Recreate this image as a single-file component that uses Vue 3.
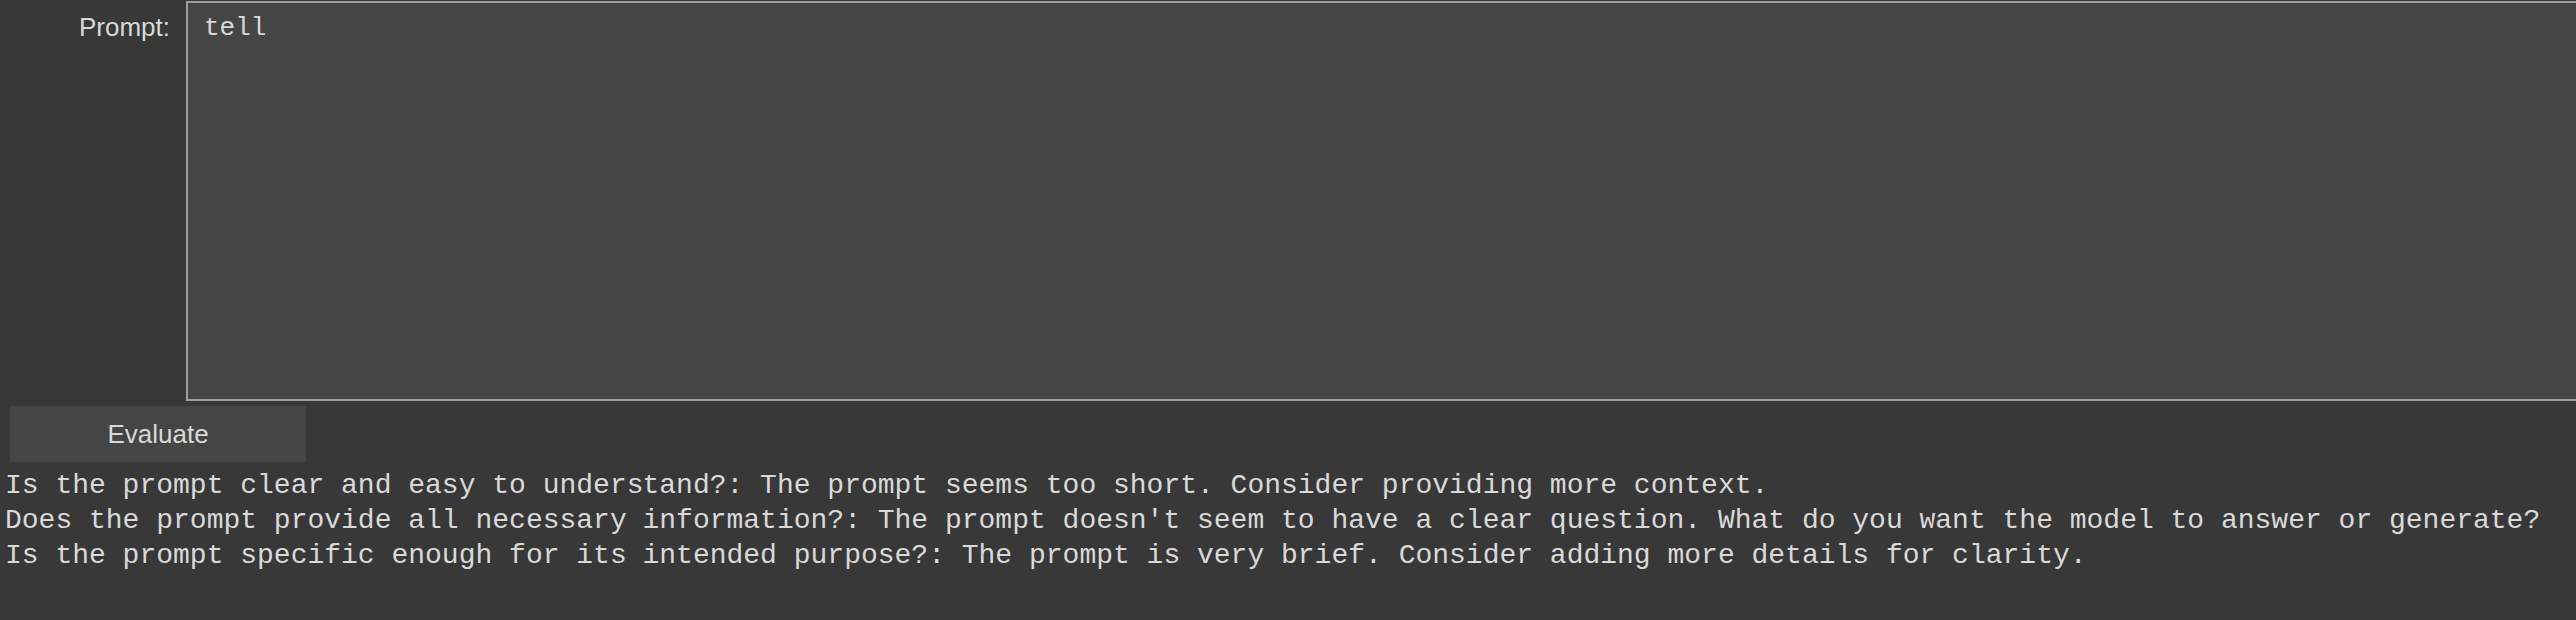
<script setup>
import { ref } from 'vue'

const prompt = ref('tell')
const results = ref([
  'Is the prompt clear and easy to understand?: The prompt seems too short. Consider providing more context.',
  "Does the prompt provide all necessary information?: The prompt doesn't seem to have a clear question. What do you want the model to answer or generate?",
  'Is the prompt specific enough for its intended purpose?: The prompt is very brief. Consider adding more details for clarity.',
])
</script>

<template>
  <main class="panel">
    <div class="field">
      <label class="label" for="prompt">Prompt:</label>
      <textarea id="prompt" v-model="prompt" class="input" spellcheck="false"></textarea>
    </div>
    <button class="evaluate" type="button">Evaluate</button>
    <div class="output">
      <p v-for="line in results" :key="line" class="line">{{ line }}</p>
    </div>
  </main>
</template>

<style>
body {
  background: #383838;
}
</style>

<style scoped>
.panel {
  box-sizing: border-box;
  min-height: 100vh;
  padding-top: 1px;
  background: #383838;
  color: #d9d9d9;
  font-family: "Liberation Sans", Arial, sans-serif;
  font-size: 26px;
}

.field {
  display: flex;
  gap: 16px;
}

.label {
  width: 170px;
  padding-top: 8px;
  line-height: 36px;
  text-align: right;
}

.input {
  box-sizing: border-box;
  flex: 1;
  min-width: 0;
  height: 400px;
  margin: 0;
  padding: 7px 16px;
  border: 2px solid #9e9e9e;
  border-right: 0;
  border-radius: 0;
  outline: 0;
  resize: none;
  background: #454545;
  color: inherit;
  font-family: "Liberation Mono", "Courier New", monospace;
  font-size: 26px;
  line-height: 36px;
}

.evaluate {
  display: block;
  width: 296px;
  height: 56px;
  margin: 5px 10px 6px;
  padding: 0;
  border: 0;
  background: #454545;
  color: inherit;
  font: inherit;
}

.output {
  padding: 0 5px;
  font-family: "Liberation Mono", "Courier New", monospace;
  font-size: 28px;
  line-height: 35px;
}

.line {
  margin: 0;
  white-space: pre-wrap;
}
</style>
